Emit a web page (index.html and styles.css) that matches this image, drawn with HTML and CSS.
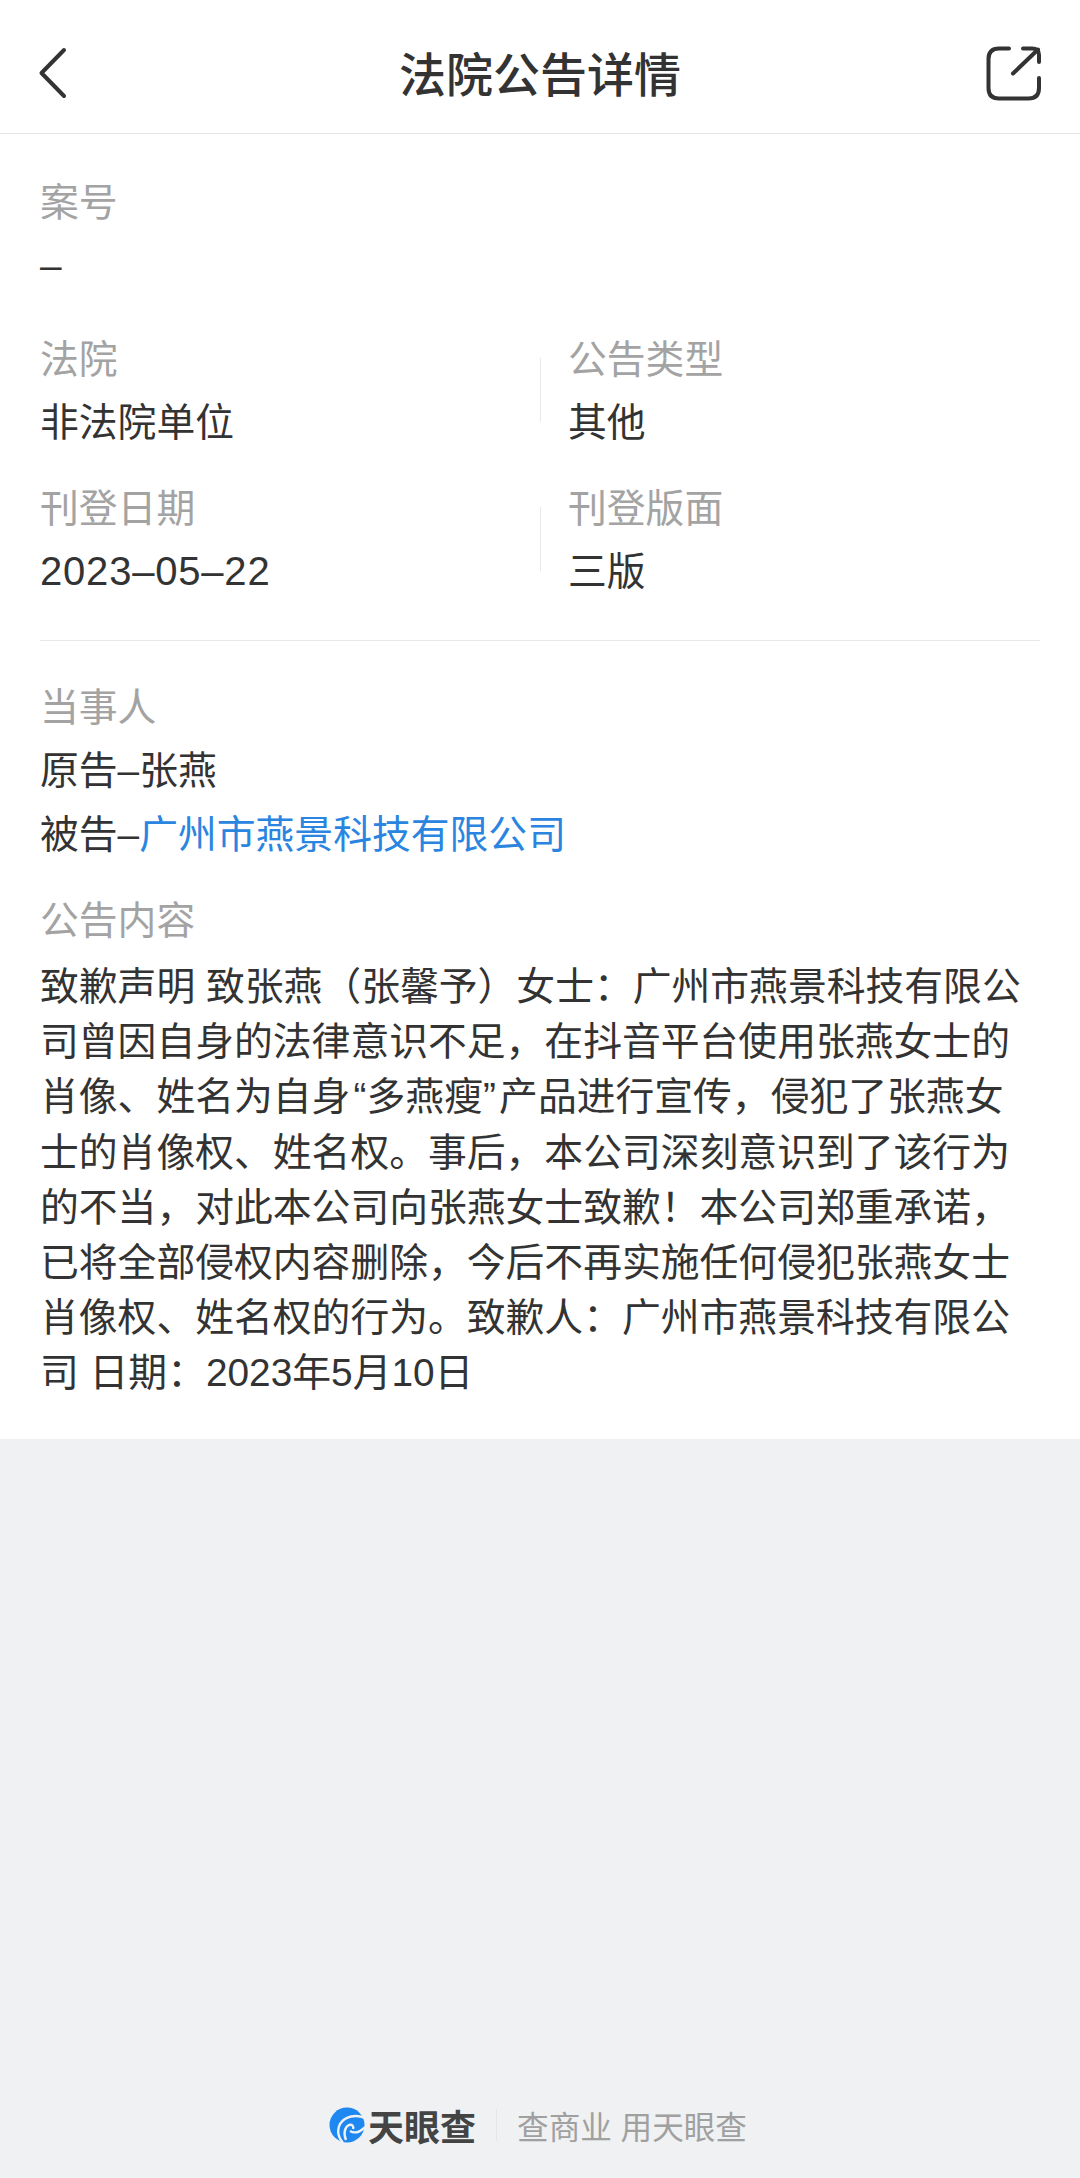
FILE: index.html
```html
<!DOCTYPE html>
<html lang="zh-CN">
<head>
    <meta charset="utf-8">
    <title>法院公告详情</title>
    <link rel="stylesheet" href="styles.css">
</head>
<body>
    <header class="topbar">
        <svg class="icon-back" viewBox="0 0 60 60" width="60" height="60">
            <path d="M28 6 L5.5 29 L28 52"></path>
        </svg>
        <h1>法院公告详情</h1>
        <svg class="icon-share" viewBox="0 0 60 60" width="60" height="60">
            <path d="M25 4.5 H15 Q4.5 4.5 4.5 15 V44 Q4.5 54.5 15 54.5 H44.5 Q55 54.5 55 44 V34"></path>
            <path d="M39 4.5 H48 Q55 4.5 55 11 V18"></path>
            <path d="M29 29.5 L54 5.5"></path>
        </svg>
    </header>

    <main class="card">
        <section class="info">
            <div class="field">
                <div class="label">案号</div>
                <div class="value">–</div>
            </div>
            <div class="pair">
                <div class="field">
                    <div class="label">法院</div>
                    <div class="value">非法院单位</div>
                </div>
                <div class="field field-right">
                    <div class="label">公告类型</div>
                    <div class="value">其他</div>
                </div>
            </div>
            <div class="pair">
                <div class="field">
                    <div class="label">刊登日期</div>
                    <div class="value"><span class="num">2023–05–22</span></div>
                </div>
                <div class="field field-right">
                    <div class="label">刊登版面</div>
                    <div class="value">三版</div>
                </div>
            </div>
        </section>
        <section class="detail">
            <div class="label">当事人</div>
            <div class="value">原告–张燕</div>
            <div class="value">被告–<span class="link">广州市燕景科技有限公司</span></div>
            <div class="label label-content">公告内容</div>
            <p class="content">致歉声明 致张燕（张馨予）女士：广州市燕景科技有限公司曾因自身的法律意识不足，在抖音平台使用张燕女士的肖像、姓名为自身&#8202;“多燕瘦”&#8202;产品进行宣传，侵犯了张燕女士的肖像权、姓名权。事后，本公司深刻意识到了该行为的不当，对此本公司向张燕女士致歉！本公司郑重承诺，已将全部侵权内容删除，今后不再实施任何侵犯张燕女士肖像权、姓名权的行为。致歉人：广州市燕景科技有限公司 日期：2023年5月10日</p>
        </section>
    </main>

    <footer class="brand">
        <svg class="brand-logo" viewBox="0 0 36 36" width="36" height="36">
            <circle cx="18" cy="18" r="17.5" fill="#1e88f0"></circle>
            <path class="swoosh" d="M36 11 C27 7 16 9 11 17 C8 23 9 30 14 36"></path>
            <path class="swoosh" d="M17 33 C14 26 16 20 20 18 C23 17 25 19 24 22"></path>
            <path class="swoosh" d="M21 24 C26 27 31 25 36 20"></path>
        </svg>
        <span class="brand-name">天眼查</span>
        <span class="brand-rule"></span>
        <span class="brand-slogan">查商业 用天眼查</span>
    </footer>
</body>
</html>
```

FILE: styles.css
```css
html {
    font-family: "Liberation Sans", "Noto Sans CJK SC", sans-serif;
    font-size: 38.8px;
    color: #333333;
}

body {
    display: flex;
    flex-direction: column;
    min-height: 2178px;
    margin: 0;
    background: #eff1f3;
}

.topbar {
    display: flex;
    height: 119px;
    padding: 14px 36px 0;
    justify-content: space-between;
    align-items: center;
    background: white;
    border-bottom: 1px solid #e6e6e6;
}

.topbar h1 {
    margin: 0 0 5px;
    font-size: 47px;
    font-weight: 500;
}

.topbar svg {
    fill: none;
    stroke: #333333;
    stroke-width: 4;
    stroke-linecap: round;
    stroke-linejoin: round;
}

.card {
    padding: 0 40px 38px;
    background: white;
}

.info {
    padding: 37px 0 14px;
    border-bottom: 1px solid #e8e8e8;
}

.label {
    height: 63px;
    line-height: 63px;
    color: #a3a3a3;
}

.value {
    height: 63px;
    line-height: 63px;
}

.num {
    font-size: 40px;
    letter-spacing: 0.8px;
}

.field {
    padding-bottom: 32px;
}

.info > .field {
    padding-bottom: 31px;
}

.pair {
    display: grid;
    grid-template-columns: 500px 1fr;
    height: 149px;
}

.field-right {
    position: relative;
    padding-left: 28px;
}

.field-right::before {
    content: "";
    position: absolute;
    left: 0;
    top: 30px;
    height: 64px;
    width: 1px;
    background: #e8e8e8;
}

.detail {
    padding-top: 35px;
}

.detail .value {
    height: 64px;
    line-height: 64px;
}

.label-content {
    margin-top: 22px;
}

.link {
    color: #2a85e0;
}

.content {
    width: 985px;
    margin: 7px 0 0;
    line-height: 55.2px;
}

.brand {
    display: flex;
    margin-top: auto;
    height: 66px;
    padding: 0 4px 20px 0;
    justify-content: center;
    align-items: center;
}

.brand-logo {
    margin-right: 3px;
}

.swoosh {
    fill: none;
    stroke: #eff1f3;
    stroke-width: 2.4;
}

.brand-name {
    font-size: 36px;
    font-weight: 700;
    color: #444444;
}

.brand-rule {
    width: 1px;
    height: 32px;
    margin: 0 20px;
    background: #e3e5e8;
}

.brand-slogan {
    font-size: 31.6px;
    color: #a0a0a0;
}
```
